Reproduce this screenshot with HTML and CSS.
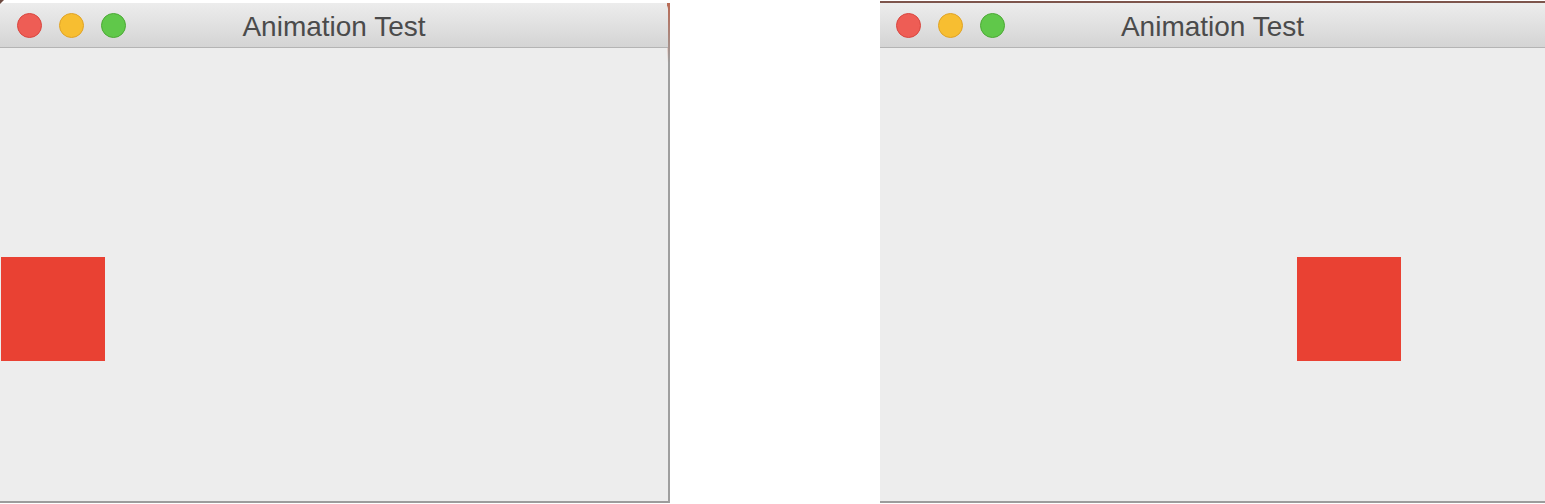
FILE: index.html
```html
<!DOCTYPE html>
<html>
<head>
<meta charset="utf-8">
<title>Animation Test</title>
<link rel="stylesheet" href="styles.css">
</head>
<body>
<div class="stage">
  <div class="window window-left">
    <div class="titlebar">
      <div class="lights">
        <span class="light red"></span>
        <span class="light yellow"></span>
        <span class="light green"></span>
      </div>
      <div class="title">Animation Test</div>
    </div>
    <div class="content content-left">
      <div class="square"></div>
    </div>
  </div>
  <div class="window window-right">
    <div class="titlebar">
      <div class="lights">
        <span class="light red"></span>
        <span class="light yellow"></span>
        <span class="light green"></span>
      </div>
      <div class="title">Animation Test</div>
    </div>
    <div class="content content-right">
      <div class="square"></div>
    </div>
  </div>
</div>
</body>
</html>
```
FILE: styles.css
```css
html, body {
  margin: 0;
  padding: 0;
  background: #ffffff;
}

body {
  width: 1545px;
  height: 504px;
  overflow: hidden;
  font-family: "Liberation Sans", Arial, sans-serif;
}

.stage {
  display: flex;
  align-items: flex-start;
  padding-top: 3px;
}

.window {
  position: relative;
  display: flex;
  flex-direction: column;
  height: 500px;
  box-sizing: border-box;
  border-bottom: 2px solid #9c9c9c;
  background: #ededed;
}

.window-left {
  width: 670px;
  border-right: 2px solid #9f9f9f;
  background: #ededed;
}

.window-left::before {
  content: "";
  position: absolute;
  top: 0;
  right: -2px;
  width: 3px;
  height: 60px;
  background: linear-gradient(to bottom, #b86a55, rgba(184, 106, 85, 0));
}

.window-left::after {
  content: "";
  position: absolute;
  top: -3px;
  left: 0;
  width: 4px;
  height: 4px;
  background: #6e4a40;
  clip-path: polygon(0 0, 100% 0, 0 100%);
}

.window-right {
  width: 665px;
  margin-left: 210px;
  box-shadow: 0 -2px 0 #7d554c;
}

.titlebar {
  position: relative;
  z-index: 1;
  height: 44px;
  flex: none;
  display: flex;
  align-items: center;
  justify-content: center;
  background: linear-gradient(to bottom, #ececec 0%, #e3e3e3 40%, #d4d4d4 100%);
  border-bottom: 1px solid #b4b4b4;
  border-radius: 6px 6px 0 0;
}

.window-right .titlebar {
  border-radius: 2px 6px 0 0;
}

.lights {
  position: absolute;
  left: 17px;
  top: 10px;
  display: flex;
  gap: 17px;
}

.window-right .lights {
  left: 16px;
}

.light {
  width: 25px;
  height: 25px;
  border-radius: 50%;
  box-sizing: border-box;
}

.light.red {
  background: #ee5d55;
  border: 1px solid #d9463f;
}

.light.yellow {
  background: #f7be31;
  border: 1px solid #e0a326;
}

.light.green {
  background: #60c84a;
  border: 1px solid #4ca935;
}

.title {
  font-size: 28px;
  color: #4b4b4b;
  line-height: 1;
  margin-top: 3px;
}

.content {
  flex: 1;
  background: #ededed;
}

.square {
  width: 104px;
  height: 104px;
  background: #e94133;
  margin-top: 209px;
}

.content-left .square {
  margin-left: 1px;
}

.content-right .square {
  margin-left: 417px;
}
```
